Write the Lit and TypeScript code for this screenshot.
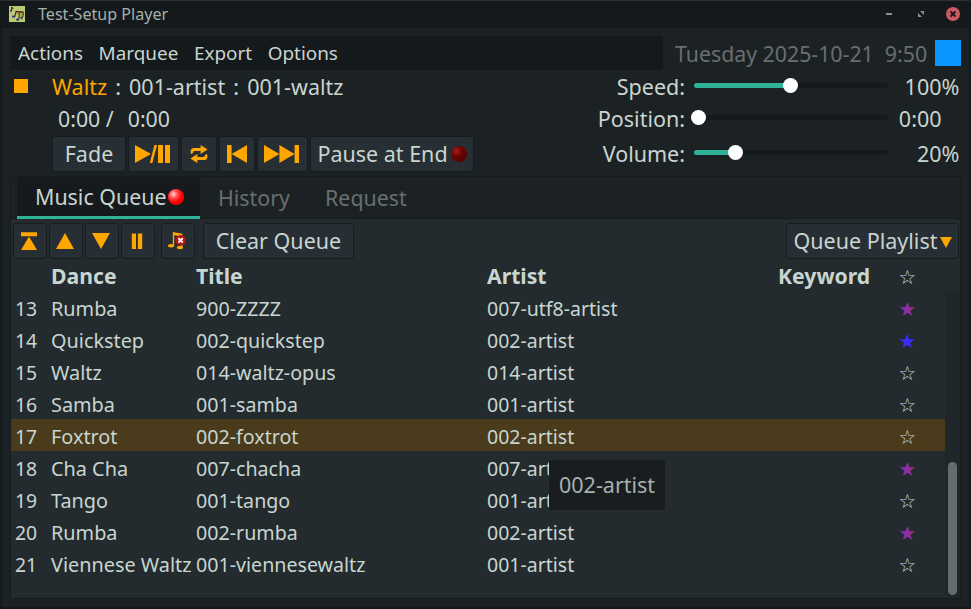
import { LitElement, html, css, svg } from "lit";
import { customElement, property } from "lit/decorators.js";
import { classMap } from "lit/directives/class-map.js";

interface Song {
  n: number;
  dance: string;
  title: string;
  artist: string;
  star: "none" | "high" | "top";
}

const QUEUE: Song[] = [
  { n: 13, dance: "Rumba", title: "900-ZZZZ", artist: "007-utf8-artist", star: "high" },
  { n: 14, dance: "Quickstep", title: "002-quickstep", artist: "002-artist", star: "top" },
  { n: 15, dance: "Waltz", title: "014-waltz-opus", artist: "014-artist", star: "none" },
  { n: 16, dance: "Samba", title: "001-samba", artist: "001-artist", star: "none" },
  { n: 17, dance: "Foxtrot", title: "002-foxtrot", artist: "002-artist", star: "none" },
  { n: 18, dance: "Cha Cha", title: "007-chacha", artist: "007-artist", star: "high" },
  { n: 19, dance: "Tango", title: "001-tango", artist: "001-artist", star: "none" },
  { n: 20, dance: "Rumba", title: "002-rumba", artist: "002-artist", star: "high" },
  { n: 21, dance: "Viennese Waltz", title: "001-viennesewaltz", artist: "001-artist", star: "none" },
];
const CURRENT = 17;

const icon = (w: number, h: number, body: unknown) =>
  html`<svg width=${w} height=${h} viewBox="0 0 ${w} ${h}" fill="#ffa600">${body}</svg>`;

const playPause = icon(35, 18, svg`<path d="M0 0L16 9L0 18zM19.4 0H22L17.4 18H14.8zM23 0h5v18h-5zM30 0h5v18h-5z"/>`);
const repeat = icon(18, 18, svg`
  <path d="M0.6 8.2V6.6Q0.6 3 4 3H10.6V0L17.6 4.6L10.6 9V6H4.6Q3.2 6 3.2 7.4L1.8 9z"/>
  <path d="M17.4 9.8V11.4Q17.4 15 14 15H7.4V18L0.4 13.4L7.4 9V12H13.4Q14.8 12 14.8 10.6L16.2 9z"/>`);
const prev = icon(20, 18, svg`<path d="M0 0h4.6v18H0zM20 0v18L4.6 9z"/>`);
const next = icon(35, 18, svg`<path d="M0 0L15.4 9L0 18zM15.4 0L30.6 9L15.4 18zM30.6 0H35v18h-4.4z"/>`);
const toTop = icon(18, 18, svg`<path d="M1 0.2h16v4H1zM9 4.4L17 18H1z"/>`);
const up = icon(18, 18, svg`<path d="M9 1L18 17H0z"/>`);
const down = icon(18, 18, svg`<path d="M0 1H18L9 17z"/>`);
const pause = icon(18, 18, svg`<path d="M3.8 1.5h4.2v15.5H3.8zM9.9 1.5h4.3v15.5H9.9z"/>`);
const noteRemove = icon(20, 20, svg`
  <path d="M5.8 1L15.4 2.8V16.5H14V5.6L7.2 4.2V14.6H5.8z"/>
  <ellipse cx="4.1" cy="14.7" rx="3.1" ry="1.7"/><ellipse cx="12.9" cy="16.5" rx="3.1" ry="1.7"/>
  <circle cx="13.6" cy="9.3" r="5.3" fill="#b51414"/>
  <path d="M11.4 7.1l4.4 4.4M15.8 7.1l-4.4 4.4" stroke="#fff" stroke-width="1.9"/>`);

@customElement("level-slider")
export class LevelSlider extends LitElement {
  @property({ type: Number }) knob = 0;
  static styles = css`
    :host { display: block; width: 194px; height: 15px; position: relative; }
    .wrap { padding-top: 5px; }
    .track { height: 5px; border-radius: 3px; background: #14191b; overflow: hidden; }
    .fill { height: 5px; background: #2eb398; }
    .knob { position: absolute; top: 0; width: 15px; height: 15px; border-radius: 50%; background: #fff; }
  `;
  render() {
    return html`<div class="wrap">
        <div class="track"><div class="fill" style="width:${this.knob > 8 ? this.knob : 0}px"></div></div>
      </div>
      <div class="knob" style="left:${this.knob - 7.5}px"></div>`;
  }
}

@customElement("app-root")
export class AppRoot extends LitElement {
  static styles = css`
    :host {
      display: flex; flex-direction: column; box-sizing: border-box;
      width: 971px; height: 609px; overflow: hidden;
      background: #1c2224; color: #c8d5d0;
      border: 2px solid #14191b; border-top: 1px solid #2a3033;
      font: 21.5px/32px "Noto Sans", sans-serif; white-space: nowrap;
    }
    * { box-sizing: border-box; }
    svg { display: block; flex: none; }
    .title { display: flex; align-items: center; height: 27px; background: #14191b; padding: 0 8px 1px 7px; font-size: 16.1px; color: #a5b0ad; flex: none; }
    .title .name { margin-left: 13px; flex: 1; line-height: 26px; }
    .menurow { display: flex; height: 34px; margin: 8px 8px 0; flex: none; }
    .menu { display: flex; align-items: center; width: 653px; background: #14191b; font-size: 18.9px; padding-left: 8px; gap: 15.6px; }
    .date { color: #686f6e; margin-left: 12px; line-height: 35px; width: 260px; font-size: 21.3px; white-space: pre; }
    .swatch { width: 26px; height: 26px; margin-top: 4px; background: #0b96ff; }
    .player { display: flex; justify-content: space-between; height: 106px; padding-left: 8px; flex: none; }
    .info { display: flex; flex-direction: column; }
    .song { display: flex; height: 33px; line-height: 33px; padding-left: 4px; }
    .stop { width: 14px; height: 14px; background: #ffa600; margin: 9px 24px 0 0; }
    .dance { color: #ffa600; }
    .sep { width: 22px; text-align: center; }
    .time { height: 33px; line-height: 32px; padding-left: 48px; display: flex; font-size: 21.3px; }
    .time .len { margin-left: 14px; }
    .btns { display: flex; gap: 2px; padding-left: 42px; }
    .btn { display: flex; align-items: center; justify-content: center; height: 36px; border: 1px solid #171c1e; border-radius: 3px; background: #272f34; flex: none; line-height: 34px; }
    .w34 { width: 34px; padding-right: 2px; } .w36 { width: 36px; padding-right: 1px; } .w51 { width: 51px; padding-right: 2px; }
    .fade { width: 74px; } .pae { width: 164px; gap: 3px; }
    .led { width: 16px; height: 16px; border-radius: 50%; flex: none; }
    .led.on { background: radial-gradient(circle at 35% 32%, #ffd0d0 0, #ff4a4a 28%, #ff0000 55%, #e80000 100%); }
    .led.off { background: radial-gradient(circle at 35% 32%, #a82020 0, #6e0404 35%, #5c0000 70%, #430000 100%); }
    .levels { display: grid; grid-template-columns: 93px 194px 53.5px 18.5px; grid-template-rows: 33px 32px 38px; padding-right: 9px; }
    .levels > * { align-self: center; }
    .lab { text-align: right; padding-right: 9px; margin-left: -20px; }
    .val { text-align: right; }
    .levels level-slider { margin-top: -3px; }
    .book { display: flex; flex-direction: column; margin: 0 8px; height: 423px; border: 1px solid #161b1d; background: #232b2e; position: relative; flex: none; }
    .tabs { display: flex; height: 42px; background: #1c2224; border-bottom: 1px solid #161b1d; padding-left: 6px; flex: none; color: #686f6e; line-height: 41px; font-size: 21.4px; }
    .tab { padding: 0 17px 0 18px; }
    .tab.sel { display: flex; width: 183px; height: 42px; background: #161a1c; border-bottom: 3px solid #2eb398; color: #c8d5d0; align-items: center; padding: 0 0 0 18px; gap: 1px; }
    .tab.sel span { line-height: 39px; }
    .tools { display: flex; gap: 2px; padding: 4px 1px 0 2px; height: 40px; flex: none; }
    .rm { margin-left: 4px; } .clear { width: 151px; margin-left: 6px; }
    .qp { width: 173px; margin-left: auto; gap: 3px; padding-left: 1px; }
    .qp svg { margin-top: 2px; }
    .row { display: grid; grid-template-columns: 40px 145px 291px 292px 120px 46px; width: 934px; height: 32px; line-height: 35px; font-size: 19.65px; }
    .row.head { line-height: 33px; font-size: 21.2px; font-weight: bold; flex: none; }
    .row.head .key { margin-left: -1px; }
    .row.cur { background: #4a3b1c; }
    .row > * { height: 32px; }
    .num { padding-left: 4px; font-size: 19.4px; }
    .dn { font-size: 19.85px; }
    .ar { font-size: 19.5px; }
    .star { font-family: "DejaVu Sans", sans-serif; font-weight: normal; font-size: 19.7px; line-height: 37px; margin-left: -0.6px; }
    .star.high { color: #8c2fa0; } .star.top { color: #3a2cff; }
    .list { display: flex; flex: 1; min-height: 0; }
    .rows { flex: 1; }
    .bar { width: 15px; background: #20272a; padding: 171px 3px 0; }
    .thumb { width: 9px; height: 133px; border-radius: 5px; background: #646d6b; }
    .tip { position: absolute; left: 538px; top: 283px; width: 116px; height: 50px; line-height: 50px; padding-left: 10px; background: #1a1d20; border-radius: 1px; color: #a5b2ae; }
  `;

  render() {
    return html`
      <div class="title">
        <svg width="16" height="16" viewBox="0 0 16 16">
          <rect width="16" height="16" fill="#bccb72"/>
          <path d="M2.6 1v4M2.6 1L4.4 3" fill="none" stroke="#15172f" stroke-width="1"/>
          <circle cx="1.8" cy="5" r=".9" fill="#343680"/>
          <path d="M6.5 5.5L14.5 6.2" stroke="#46281c" stroke-width="1.6"/>
          <path d="M7 6L5.8 10.5M10.5 6.5L9.8 13M14.4 6.5L13.8 11" stroke="#4a3424" stroke-width="1.2"/>
          <path d="M8.5 7.5h2M11.5 8.5h2.5M11.5 11.5l2 2" stroke="#a07038" stroke-width="1.4"/>
          <g fill="#343680"><ellipse cx="4.6" cy="10.6" rx="1.7" ry="1.2"/><ellipse cx="8.7" cy="13.6" rx="1.7" ry="1.2"/><ellipse cx="12.6" cy="11.6" rx="1.3" ry="1"/></g>
        </svg>
        <span class="name">Test-Setup Player</span>
        <svg width="75" height="14" viewBox="0 0 75 14">
          <rect x="0" y="6" width="6" height="2" fill="#89918f"/>
          <path d="M34 4h4v4zM32 6V10H36z" fill="#89918f"/>
          <circle cx="67" cy="7" r="7" fill="#cf5960"/>
          <path d="M64.5 4.5l5 5M69.5 4.5l-5 5" stroke="#14191b" stroke-width="1.8"/>
        </svg>
      </div>
      <div class="menurow">
        <div class="menu">${["Actions", "Marquee", "Export", "Options"].map((m) => html`<span>${m}</span>`)}</div>
        <span class="date">Tuesday 2025-10-21  9:50</span>
        <div class="swatch"></div>
      </div>
      <div class="player">
        <div class="info">
          <div class="song">
            <div class="stop"></div><span class="dance">Waltz</span><span class="sep">:</span><span>001-artist</span><span class="sep">:</span><span>001-waltz</span>
          </div>
          <div class="time"><span>0:00 /</span><span class="len">0:00</span></div>
          <div class="btns">
            <div class="btn fade">Fade</div>
            <div class="btn w51">${playPause}</div>
            <div class="btn w36">${repeat}</div>
            <div class="btn w36">${prev}</div>
            <div class="btn w51">${next}</div>
            <div class="btn pae"><span>Pause at End</span><i class="led off"></i></div>
          </div>
        </div>
        <div class="levels">
          <span class="lab">Speed:</span><level-slider .knob=${96.5}></level-slider><span class="val">100</span><span>%</span>
          <span class="lab">Position:</span><level-slider .knob=${4.5}></level-slider><span class="val">0:00</span><span></span>
          <span class="lab">Volume:</span><level-slider .knob=${41.5}></level-slider><span class="val">20</span><span>%</span>
        </div>
      </div>
      <div class="book">
        <div class="tabs">
          <div class="tab sel"><span>Music Queue</span><i class="led on"></i></div>
          <div class="tab">History</div>
          <div class="tab">Request</div>
        </div>
        <div class="tools">
          ${[toTop, up, down, pause].map((i) => html`<div class="btn w34">${i}</div>`)}
          <div class="btn w34 rm">${noteRemove}</div>
          <div class="btn clear">Clear Queue</div>
          <div class="btn qp"><span>Queue Playlist</span>${icon(12, 11, svg`<path d="M0 0h12L6 11z"/>`)}</div>
        </div>
        <div class="row head"><span></span><span>Dance</span><span>Title</span><span>Artist</span><span class="key">Keyword</span><span class="star">☆</span></div>
        <div class="list">
          <div class="rows">
            ${QUEUE.map(
              (s) => html`<div class=${classMap({ row: true, cur: s.n === CURRENT })}>
                <span class="num">${s.n}</span><span class="dn">${s.dance}</span><span>${s.title}</span><span class="ar">${s.artist}</span><span></span>
                <span class="star ${s.star}">${s.star === "none" ? "☆" : "★"}</span>
              </div>`
            )}
          </div>
          <div class="bar"><div class="thumb"></div></div>
        </div>
        <div class="tip">002-artist</div>
      </div>`;
  }
}
